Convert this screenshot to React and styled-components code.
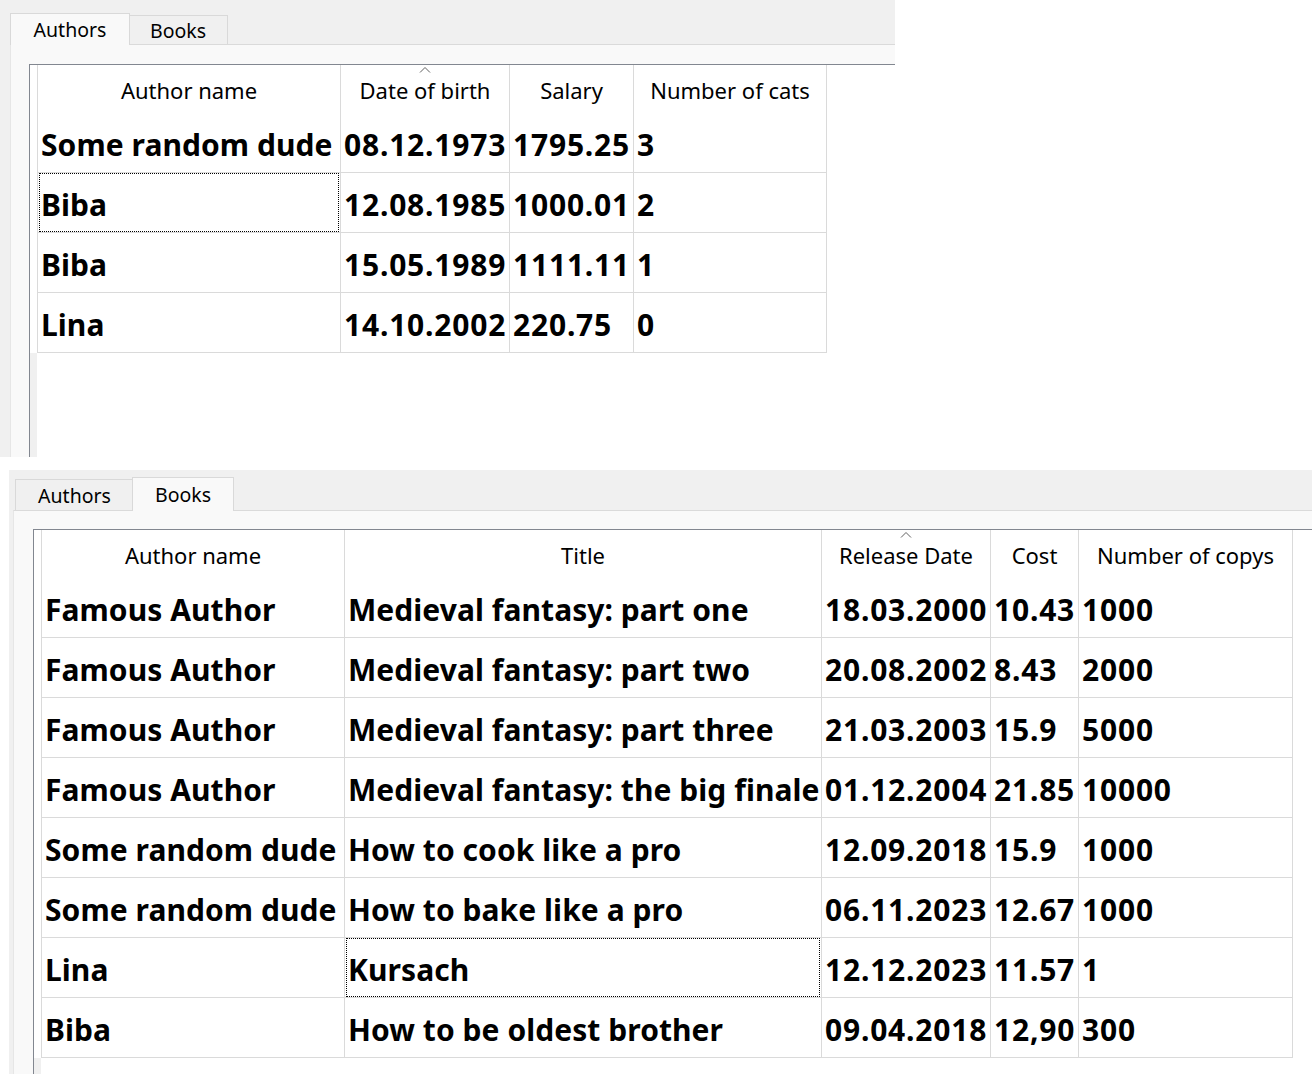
import React from 'react';
import styled, { createGlobalStyle } from 'styled-components';

const Global = createGlobalStyle`
  html, body { margin: 0; padding: 0; background: #ffffff; }
  body { font-family: "Noto Sans", "Open Sans", sans-serif; color: #000; }
`;

const Page = styled.div`
  display: flex;
  flex-direction: column;
  align-items: flex-start;
  gap: 13px;
`;

const Window = styled.div`
  box-sizing: border-box;
  width: ${p => p.$w}px;
  height: ${p => p.$h}px;
  margin-left: ${p => p.$ml}px;
  padding-left: ${p => p.$pl}px;
  background: #f0f0f0;
  display: flex;
  flex-direction: column;
  overflow: hidden;
`;

const TabBar = styled.div`
  height: ${p => p.$h}px;
  flex-shrink: 0;
  display: flex;
  align-items: flex-end;
  padding-left: 2px;
  position: relative;
  z-index: 2;
`;

const Tab = styled.div`
  box-sizing: border-box;
  width: ${p => p.$w}px;
  height: ${p => p.$h}px;
  flex-shrink: 0;
  border: 1px solid #d9d9d9;
  border-bottom: none;
  background: ${p => (p.$active ? '#f9f9f9' : '#f0f0f0')};
  margin: 0 ${p => (p.$active ? '-2px' : '0')} ${p => (p.$active ? '-1px' : '0')};
  position: relative;
  z-index: ${p => (p.$active ? 2 : 1)};
  display: flex;
  align-items: center;
  justify-content: center;
  padding-bottom: ${p => (p.$active ? 1 : 0)}px;
  font-size: 19.5px;
  color: #000;
`;

const Pane = styled.div`
  flex: 1;
  box-sizing: border-box;
  background: #f9f9f9;
  border-top: 1px solid #dadada;
  border-left: 1px solid #e6e6e6;
  padding: ${p => p.$pt}px 0 0 ${p => p.$pl}px;
  display: flex;
  min-height: 0;
`;

const Frame = styled.div`
  flex: 1;
  background: #ffffff;
  border-left: 1px solid #828790;
  border-top: 1px solid #828790;
  display: flex;
  flex-direction: column;
  min-width: 0;
`;

const GridRow = styled.div`
  display: grid;
  grid-template-columns: 7px ${p => p.$cols};
  height: ${p => p.$h}px;
  flex-shrink: 0;
`;

const Lead = styled.div`
  background: #ffffff;
`;

const HeadCell = styled.div`
  box-sizing: border-box;
  position: relative;
  border-left: 1px solid #dadada;
  border-right: ${p => (p.$last ? '1px solid #dadada' : 'none')};
  display: flex;
  align-items: center;
  justify-content: center;
  padding-top: 1px;
  font-size: 22px;
  white-space: nowrap;
  overflow: hidden;
`;

const SortMark = styled.svg`
  position: absolute;
  top: 1px;
  left: 50%;
  transform: translateX(-50%);
`;

const Cell = styled.div`
  box-sizing: border-box;
  position: relative;
  border-left: 1px solid #dadada;
  border-right: ${p => (p.$last ? '1px solid #dadada' : 'none')};
  border-bottom: 1px solid #dadada;
  display: flex;
  align-items: center;
  padding: 3px 0 0 3px;
  font-size: 30px;
  font-weight: 700;
  letter-spacing: ${p => (p.$num ? '0.8px' : '0.06px')};
  white-space: nowrap;
  overflow: hidden;
  &::after {
    content: '';
    display: ${p => (p.$focus ? 'block' : 'none')};
    position: absolute;
    top: 0;
    left: 1px;
    right: 1px;
    bottom: 0;
    border: 1px dotted #000;
  }
`;

const Filler = styled.div`
  flex: 1;
  display: grid;
  grid-template-columns: 7px 1fr;
`;

const FillerStrip = styled.div`
  background: #f0f0f0;
`;

const FillerBody = styled.div`
  background: #ffffff;
`;

function Table({ widths, headers, rows, sortCol, focus, numFrom }) {
  const cols = widths.map(w => `${w}px`).join(' ');
  const last = headers.length - 1;
  return (
    <Frame>
      <GridRow $cols={cols} $h={48}>
        <Lead />
        {headers.map((h, i) => (
          <HeadCell key={h} $last={i === last}>
            {i === sortCol && (
              <SortMark width="12" height="7" viewBox="0 0 12 7">
                <path d="M1 6.5 L6 1.5 L11 6.5" fill="none" stroke="#606060" strokeWidth="1" />
              </SortMark>
            )}
            {h}
          </HeadCell>
        ))}
      </GridRow>
      {rows.map((r, ri) => (
        <GridRow key={ri} $cols={cols} $h={60}>
          <Lead />
          {r.map((c, ci) => (
            <Cell
              key={ci}
              $last={ci === last}
              $num={ci >= numFrom}
              $focus={focus[0] === ri && focus[1] === ci}
            >
              {c}
            </Cell>
          ))}
        </GridRow>
      ))}
      <Filler>
        <FillerStrip />
        <FillerBody />
      </Filler>
    </Frame>
  );
}

const authors = [
  ['Some random dude', '08.12.1973', '1795.25', '3'],
  ['Biba', '12.08.1985', '1000.01', '2'],
  ['Biba', '15.05.1989', '1111.11', '1'],
  ['Lina', '14.10.2002', '220.75', '0'],
];

const books = [
  ['Famous Author', 'Medieval fantasy: part one', '18.03.2000', '10.43', '1000'],
  ['Famous Author', 'Medieval fantasy: part two', '20.08.2002', '8.43', '2000'],
  ['Famous Author', 'Medieval fantasy: part three', '21.03.2003', '15.9', '5000'],
  ['Famous Author', 'Medieval fantasy: the big finale', '01.12.2004', '21.85', '10000'],
  ['Some random dude', 'How to cook like a pro', '12.09.2018', '15.9', '1000'],
  ['Some random dude', 'How to bake like a pro', '06.11.2023', '12.67', '1000'],
  ['Lina', 'Kursach', '12.12.2023', '11.57', '1'],
  ['Biba', 'How to be oldest brother', '09.04.2018', '12,90', '300'],
];

export default function App() {
  return (
    <>
      <Global />
      <Page>
        <Window $w={895} $h={457} $ml={0} $pl={10}>
          <TabBar $h={44}>
            <Tab $active $w={120} $h={32}>Authors</Tab>
            <Tab $w={100} $h={29}>Books</Tab>
          </TabBar>
          <Pane $pt={19} $pl={18}>
            <Table
              widths={[303, 169, 124, 194]}
              headers={['Author name', 'Date of birth', 'Salary', 'Number of cats']}
              rows={authors}
              sortCol={1}
              focus={[1, 0]}
              numFrom={1}
            />
          </Pane>
        </Window>
        <Window $w={1303} $h={604} $ml={9} $pl={4}>
          <TabBar $h={40}>
            <Tab $w={119} $h={31}>Authors</Tab>
            <Tab $active $w={102} $h={34}>Books</Tab>
          </TabBar>
          <Pane $pt={18} $pl={19}>
            <Table
              widths={[303, 477, 169, 88, 215]}
              headers={['Author name', 'Title', 'Release Date', 'Cost', 'Number of copys']}
              rows={books}
              sortCol={2}
              focus={[6, 1]}
              numFrom={2}
            />
          </Pane>
        </Window>
      </Page>
    </>
  );
}
